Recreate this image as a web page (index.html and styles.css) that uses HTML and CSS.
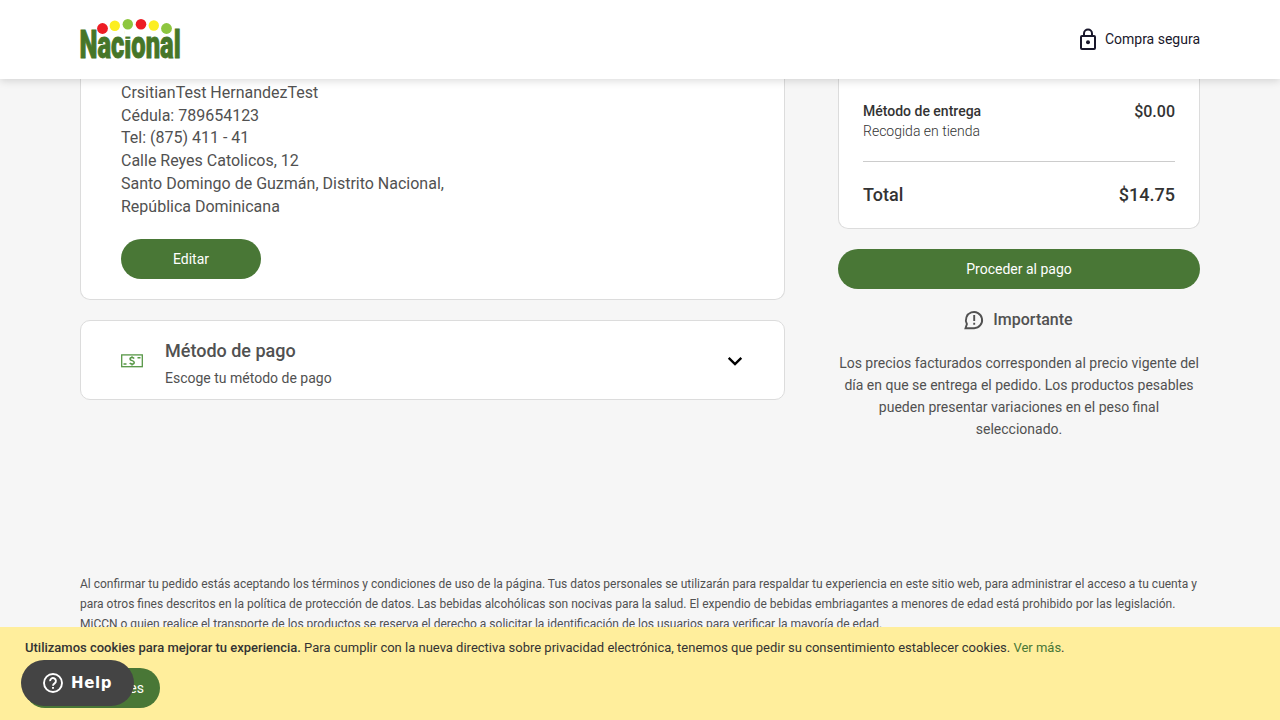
FILE: index.html
```html
<!DOCTYPE html>
<html lang="es">
<head>
<meta charset="utf-8">
<title>Nacional - Compra segura</title>
<link rel="stylesheet" href="styles.css">
</head>
<body>
<header class="header">
  <svg class="logo" width="101" height="42" viewBox="0 0 101 42" role="img" aria-label="Nacional">
    <g class="logo-word" transform="translate(-0.5 40.3)">
      <text x="0" y="0" textLength="101.2" lengthAdjust="spacingAndGlyphs">Nacional</text>
    </g>
    <path d="M44.5 4h7v14.2h-7z" fill="#fff"/>
    <circle cx="22.5" cy="10.5" r="5.4" fill="#ed1c24"/>
    <circle cx="34.8" cy="7.7" r="5.2" fill="#fcee21"/>
    <circle cx="47.8" cy="6.2" r="5.2" fill="#8dc63f"/>
    <circle cx="61" cy="6.2" r="5.3" fill="#ed1c24"/>
    <circle cx="73.8" cy="7.5" r="5.2" fill="#fcee21"/>
    <circle cx="86.5" cy="10.5" r="5.4" fill="#8dc63f"/>
    <path d="M44 21.4h7" stroke="#fff" stroke-width="1.2"/>
  </svg>
  <div class="secure">
    <svg width="18" height="22" viewBox="0 0 18 22" fill="none" stroke="#19172b" stroke-width="2">
      <rect x="2" y="8" width="14" height="13" rx="1"/>
      <path d="M5 8V5.5a4 4 0 0 1 8 0V8"/>
      <circle cx="9" cy="14.3" r="2" fill="#19172b" stroke="none"/>
    </svg>
    <span>Compra segura</span>
  </div>
</header>
<main class="main">
  <div class="columns">
    <div class="left">
      <section class="card address">
        <p class="address-text">CrsitianTest HernandezTest<br>Cédula: 789654123<br>Tel: (875) 411 - 41<br>Calle Reyes Catolicos, 12<br>Santo Domingo de Guzmán, Distrito Nacional,<br>República Dominicana</p>
        <button class="button edit">Editar</button>
      </section>
      <section class="card payment">
        <svg width="22" height="14" viewBox="0 0 22 14" fill="none" stroke="#579746" stroke-width="1.3">
          <rect x=".7" y=".9" width="20.6" height="11.8"/>
          <path stroke-width="1.5" d="M13.2 4.5C12.5 3.8 11.8 3.5 11 3.5c-1.3 0-2 .6-2 1.5 0 2.1 4.2 1.2 4.2 3.4 0 1.1-.8 1.7-2.1 1.7-1 0-1.8-.3-2.4-1M11 2.2v1.3M11 10v1.4M16.5 3.7h3M2.5 9.9h3"/>
        </svg>
        <div class="payment-text">
          <h2>Método de pago</h2>
          <p>Escoge tu método de pago</p>
        </div>
        <svg class="chevron" width="16" height="10" viewBox="0 0 16 10" fill="none" stroke="#000" stroke-width="2.4">
          <path d="M1.7 1.8 8 8l6.3-6.2"/>
        </svg>
      </section>
    </div>
    <aside class="right">
      <section class="card summary">
        <div class="row delivery">
          <div><strong>Método de entrega</strong><p>Recogida en tienda</p></div>
          <span class="amount">$0.00</span>
        </div>
        <div class="row total"><span>Total</span><span>$14.75</span></div>
      </section>
      <button class="button pay">Proceder al pago</button>
      <div class="notice-title">
        <svg width="20" height="20" viewBox="0 0 20 20" fill="none" stroke="#515151" stroke-width="1.9">
          <path d="M1.5 18.2 2.9 14A8.1 8.1 0 1 1 10.2 18.2Z"/>
          <path d="M10.2 5v6M10.2 12.7v2"/>
        </svg>
        <span>Importante</span>
      </div>
      <p class="notice">Los precios facturados corresponden al precio vigente del día en que se entrega el pedido. Los productos pesables pueden presentar variaciones en el peso final seleccionado.</p>
    </aside>
  </div>
  <p class="legal">Al confirmar tu pedido estás aceptando los términos y condiciones de uso de la página. Tus datos personales se utilizarán para respaldar tu experiencia en este sitio web, para administrar el acceso a tu cuenta y para otros fines descritos en la política de protección de datos. Las bebidas alcohólicas son nocivas para la salud. El expendio de bebidas embriagantes a menores de edad está prohibido por las legislación. MiCCN o quien realice el transporte de los productos se reserva el derecho a solicitar la identificación de los usuarios para verificar la mayoría de edad.</p>
</main>
<footer class="cookies">
  <p><strong>Utilizamos cookies para mejorar tu experiencia.</strong> Para cumplir con la nueva directiva sobre privacidad electrónica, tenemos que pedir su consentimiento establecer cookies. <a href="#">Ver más</a>.</p>
  <button class="button allow">es</button>
  <button class="help">
    <svg width="20" height="20" viewBox="0 0 20 20" fill="none" stroke="#fff" stroke-width="1.9">
      <circle cx="10" cy="10" r="9"/>
      <path d="M7.1 8.1a2.9 2.9 0 1 1 4.5 2.3c-1 .7-1.6 1.2-1.6 2.3M10 13.9v1.9"/>
    </svg>
    <span>Help</span>
  </button>
</footer>
</body>
</html>
```
FILE: styles.css
```css
* { box-sizing: border-box; }
body {
  margin: 0;
  height: 720px;
  overflow: hidden;
  display: flex;
  flex-direction: column;
  background: #f6f6f6;
  color: #515151;
  font: 14px/20px Roboto, sans-serif;
}
p, h2 { margin: 0; }
button { border: 0; padding: 0; font: inherit; }
svg { flex: none; display: block; }
.header {
  flex: none;
  height: 79px;
  padding: 0 80px;
  display: flex;
  align-items: center;
  justify-content: space-between;
  background: #fff;
  box-shadow: 0 2px 8px rgba(0, 0, 0, .14);
  z-index: 1;
}
.logo { margin-top: -1px; overflow: visible; }
.logo-word { font: 900 38.5px Roboto, sans-serif; fill: #467628; stroke: #467628; stroke-width: .9px; }
.secure { display: flex; align-items: center; gap: 8px; padding-bottom: 2px; color: #19172b; }
.main { flex: 1; min-height: 0; padding: 0 80px; overflow: hidden; }
.columns { height: 495px; display: flex; justify-content: space-between; align-items: flex-start; }
.left { width: 705px; }
.right { width: 362px; }
.card { background: #fff; border: 1px solid #dcdcdc; border-radius: 10px; }
.address { height: 221px; padding: 2.75px 40px 0; border-top: 0; border-radius: 0 0 10px 10px; }
.address-text { height: 157.25px; font-size: 16px; line-height: 22.857px; }
.button { display: block; height: 40px; border-radius: 20px; background: #497736; color: #fff; }
.edit { width: 140px; }
.payment { height: 80px; margin-top: 20px; padding: 2px 41px 0 40px; display: flex; align-items: center; }
.payment-text { flex: 1; margin-left: 22px; padding-top: 4px; }
.payment-text h2 { font-size: 18px; font-weight: 500; line-height: 26px; }
.payment-text p { margin-top: 4px; }
.summary { height: 150px; padding: 22px 24px 0; border-top: 0; border-radius: 0 0 10px 10px; color: #333; }
.row { display: flex; justify-content: space-between; }
.row strong { font-weight: 500; }
.row p { font-weight: 300; }
.delivery { height: 61px; border-bottom: 1px solid #ccc; }
.amount { padding-top: 1px; font-size: 16px; font-weight: 500; }
.total { padding-top: 23px; font-size: 18px; font-weight: 500; }
.pay { width: 100%; margin-top: 20px; }
.notice-title {
  margin-top: 21px;
  padding-right: 1px;
  display: flex;
  align-items: center;
  justify-content: center;
  gap: 9px;
  font-size: 16px;
  font-weight: 500;
}
.notice { margin: 22px -4px 0; line-height: 22px; text-align: center; }
.legal { font-size: 12px; }
.cookies {
  position: relative;
  flex: none;
  height: 93px;
  padding: 11px 25px 0;
  background: #ffee9c;
  color: #333;
  font-size: 13px;
}
.cookies strong { font-weight: 500; }
.cookies a { color: #497736; text-decoration: none; }
.allow { width: 135px; margin-top: 10px; padding-right: 16px; font-size: 14px; text-align: right; }
.help {
  position: absolute;
  left: 21px;
  top: 33px;
  width: 113px;
  height: 46px;
  padding-left: 22px;
  display: flex;
  align-items: center;
  gap: 8px;
  border-radius: 23px;
  background: #444;
  color: #fff;
  font: 700 15px/20px "DejaVu Sans", sans-serif;
  letter-spacing: .6px;
}
```
